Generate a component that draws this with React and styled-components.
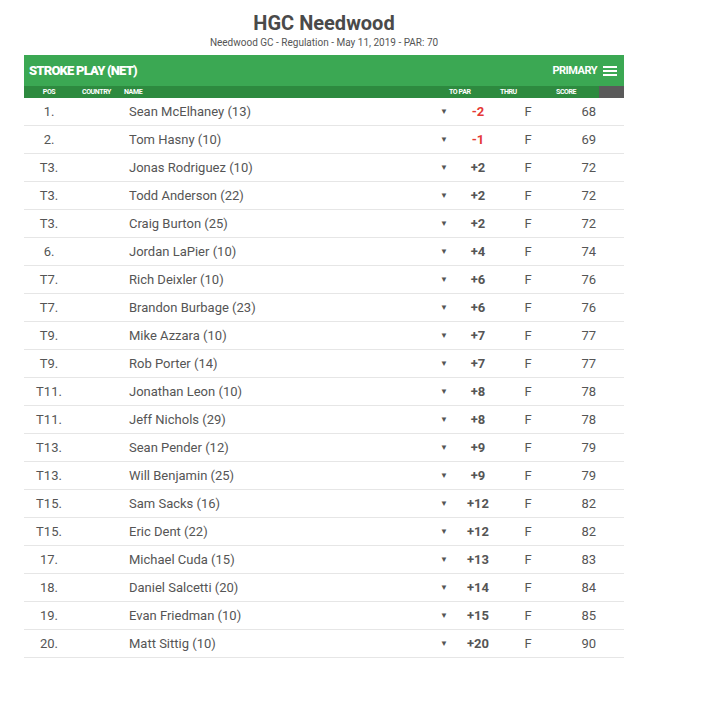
import styled, { createGlobalStyle } from 'styled-components';

const GlobalStyle = createGlobalStyle`
    html, body {
        margin: 0;
        padding: 0;
        background: #fff;
        font-family: Roboto, "Liberation Sans", sans-serif;
    }
`;

const players = [
    ['1.', 'Sean McElhaney (13)', '-2', '68'],
    ['2.', 'Tom Hasny (10)', '-1', '69'],
    ['T3.', 'Jonas Rodriguez (10)', '+2', '72'],
    ['T3.', 'Todd Anderson (22)', '+2', '72'],
    ['T3.', 'Craig Burton (25)', '+2', '72'],
    ['6.', 'Jordan LaPier (10)', '+4', '74'],
    ['T7.', 'Rich Deixler (10)', '+6', '76'],
    ['T7.', 'Brandon Burbage (23)', '+6', '76'],
    ['T9.', 'Mike Azzara (10)', '+7', '77'],
    ['T9.', 'Rob Porter (14)', '+7', '77'],
    ['T11.', 'Jonathan Leon (10)', '+8', '78'],
    ['T11.', 'Jeff Nichols (29)', '+8', '78'],
    ['T13.', 'Sean Pender (12)', '+9', '79'],
    ['T13.', 'Will Benjamin (25)', '+9', '79'],
    ['T15.', 'Sam Sacks (16)', '+12', '82'],
    ['T15.', 'Eric Dent (22)', '+12', '82'],
    ['17.', 'Michael Cuda (15)', '+13', '83'],
    ['18.', 'Daniel Salcetti (20)', '+14', '84'],
    ['19.', 'Evan Friedman (10)', '+15', '85'],
    ['20.', 'Matt Sittig (10)', '+20', '90'],
];

const Page = styled.div`
    padding: 12px 0 0 24px;
    width: 600px;
`;

const Title = styled.h1`
    margin: 0;
    text-align: center;
    font-size: 20px;
    font-weight: 700;
    color: #4a4a4a;
    line-height: 22px;
`;

const Subtitle = styled.div`
    text-align: center;
    font-size: 10px;
    color: #555;
    line-height: 14px;
    margin-top: 2px;
    margin-bottom: 5px;
`;

const TopBar = styled.div`
    height: 31px;
    background: #3ba853;
    display: flex;
    align-items: center;
    justify-content: space-between;
    padding: 0 7px 0 5px;
    color: #fff;
    font-weight: 700;
`;

const BarTitle = styled.span`
    font-size: 13px;
    font-weight: 900;
    letter-spacing: -0.8px;
`;

const BarRight = styled.div`
    display: flex;
    align-items: center;
    gap: 6px;
    font-size: 11px;
    letter-spacing: -0.5px;
`;

const Burger = styled.div`
    display: flex;
    flex-direction: column;
    gap: 2px;
    span {
        display: block;
        width: 14px;
        height: 2px;
        background: #fff;
    }
`;

const HeadRow = styled.div`
    display: grid;
    grid-template-columns: 50px 50px 325px 51px 56px 43px 25px;
    align-items: center;
    height: 12px;
    background: #2d8a3f;
    color: #fff;
    font-size: 7px;
    font-weight: 700;
    letter-spacing: -0.4px;
`;

const HeadCell = styled.div`
    text-align: ${(p) => p.$align || 'left'};
    padding-left: ${(p) => p.$pl || 0}px;
`;

const DarkCell = styled.div`
    height: 12px;
    background: #5a5a5a;
`;

const Row = styled.div`
    display: grid;
    grid-template-columns: 50px 50px 312px 16px 52px 48px 44px 28px;
    align-items: center;
    height: 27px;
    border-bottom: 1px solid #e6e6e6;
    font-size: 13px;
    color: #555;
`;

const Cell = styled.div`
    text-align: ${(p) => p.$align || 'left'};
    padding-left: ${(p) => p.$pl || 0}px;
`;

const Caret = styled.div`
    font-size: 8px;
    color: #555;
    text-align: center;
`;

const ToPar = styled.div`
    text-align: center;
    font-weight: 700;
    color: ${(p) => (p.$under ? '#e53935' : '#555')};
`;

export default function App() {
    return (
        <>
            <GlobalStyle />
            <Page>
                <Title>HGC Needwood</Title>
                <Subtitle>Needwood GC - Regulation - May 11, 2019 - PAR: 70</Subtitle>
                <TopBar>
                    <BarTitle>STROKE PLAY (NET)</BarTitle>
                    <BarRight>
                        PRIMARY
                        <Burger>
                            <span />
                            <span />
                            <span />
                        </Burger>
                    </BarRight>
                </TopBar>
                <HeadRow>
                    <HeadCell $align="center">POS</HeadCell>
                    <HeadCell $pl={8}>COUNTRY</HeadCell>
                    <HeadCell>NAME</HeadCell>
                    <HeadCell>TO PAR</HeadCell>
                    <HeadCell>THRU</HeadCell>
                    <HeadCell>SCORE</HeadCell>
                    <DarkCell />
                </HeadRow>
                {players.map(([pos, name, par, score], i) => (
                    <Row key={i}>
                        <Cell $align="center">{pos}</Cell>
                        <Cell />
                        <Cell $pl={5}>{name}</Cell>
                        <Caret>▼</Caret>
                        <ToPar $under={par.startsWith('-')}>{par}</ToPar>
                        <Cell $align="center">F</Cell>
                        <Cell $align="right">{score}</Cell>
                        <Cell />
                    </Row>
                ))}
            </Page>
        </>
    );
}
